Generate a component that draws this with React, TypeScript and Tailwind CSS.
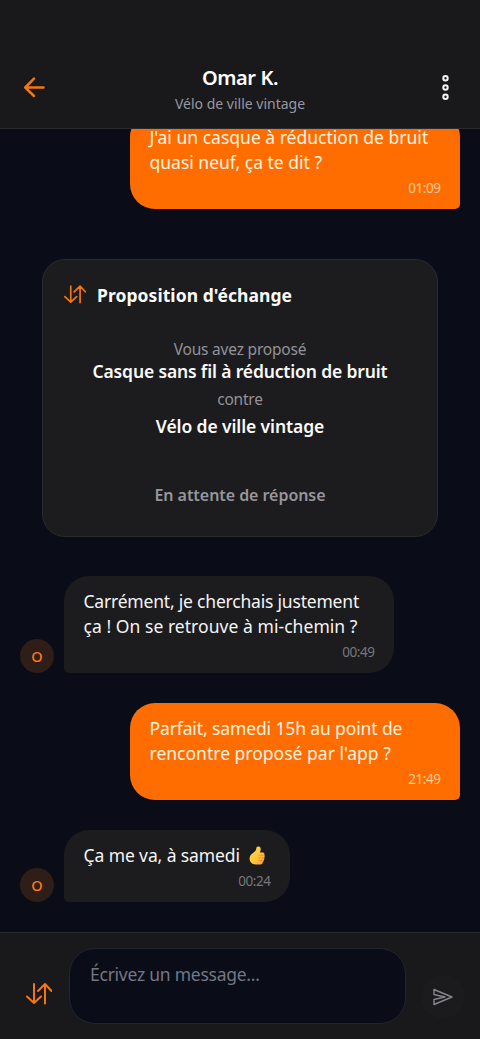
import React from 'react';
import clsx from 'clsx';

interface Message {
  lines: string[];
  time: string;
  mine?: boolean;
  thumb?: boolean;
  spacing: string[];
}

interface IconProps {
  className?: string;
}

const ExchangeIcon: React.FC<IconProps> = ({ className }) => (
  <svg
    viewBox="0 0 26 22"
    fill="none"
    stroke="currentColor"
    strokeLinecap="round"
    strokeLinejoin="round"
    className={className}
  >
    <path d="M8 1v19M1 13.5l7 6.5 7-6.5M19 20.5V1M12 8l7-7 6.5 7" />
  </svg>
);

const ThumbIcon: React.FC<IconProps> = ({ className }) => (
  <svg viewBox="0 0 16 19" className={className}>
    <defs>
      <linearGradient id="thumb" x1="0" y1="0" x2="1" y2="1">
        <stop offset="0" stopColor="#ffda4a" />
        <stop offset="0.6" stopColor="#ffc23c" />
        <stop offset="1" stopColor="#ee9b35" />
      </linearGradient>
    </defs>
    <path
      d="M9 .6c1.900-.4 2.900 1 2.700 2.800-.1 1.300-.6 2.400-.8 3.100h2.900c1.500 0 2 1.400 1.400 2.400.7.7.7 1.900 0 2.600.5.9.2 1.900-.5 2.400.3 1-.2 1.900-1 2.200.1 1.500-.8 2.300-2.200 2.300H6.500C3 18.400.6 16 .6 12.800c0-2.700 1-4.200 3.100-5.600C6.200 5.500 7 4.200 7.300 2.400 7.400 1.300 8.100.8 9 .6z"
      fill="url(#thumb)"
    />
    <path
      d="M9.800 9.200h5.200M9.800 11.900h5M9.800 14.500h4.200"
      stroke="#dd842b"
      strokeWidth="0.7"
      strokeLinecap="round"
      fill="none"
    />
  </svg>
);

const messages: Message[] = [
  {
    lines: ["J'ai un casque à réduction de bruit", 'quasi neuf, ça te dit ?'],
    time: '01:09',
    mine: true,
    spacing: ['tracking-[0.01px]', 'tracking-normal'],
  },
];

const replies: Message[] = [
  {
    lines: ['Carrément, je cherchais justement', 'ça ! On se retrouve à mi-chemin ?'],
    time: '00:49',
    spacing: ['tracking-[-0.2px]', 'tracking-[0.05px]'],
  },
  {
    lines: ['Parfait, samedi 15h au point de', "rencontre proposé par l'app ?"],
    time: '21:49',
    mine: true,
    spacing: ['tracking-[-0.12px]', 'tracking-[0.01px]'],
  },
  {
    lines: ['Ça me va, à samedi'],
    time: '00:24',
    thumb: true,
    spacing: ['tracking-[-0.1px]'],
  },
];

const Bubble: React.FC<{ message: Message }> = ({ message }) => {
  const { lines, time, mine, thumb, spacing } = message;

  return (
    <div className={clsx('flex shrink-0 items-end', mine ? 'justify-end' : 'justify-start')}>
      {!mine && (
        <div className="mr-2.5 flex size-[34px] shrink-0 items-center justify-center rounded-full bg-[#2f1d17] pt-px text-[14.500px] font-medium text-[#ff7a10]">
          O
        </div>
      )}
      <div
        className={clsx(
          'rounded-[25px] px-[19.5px] pt-[12.500px]',
          mine ? 'rounded-br-[5px] bg-[#ff6d00] text-[#fff3e2]' : 'rounded-bl-[5px] bg-[#1c1c1e] text-[#f4f4f5]',
          thumb ? 'h-[72px] w-[226px]' : 'h-[97px] w-[330px]',
        )}
      >
        {lines.map((line, i) => (
          <p key={line} className={clsx('flex items-center whitespace-nowrap text-[17.500px] leading-[25px]', spacing[i])}>
            {line}
            {thumb && <ThumbIcon className="ml-[9px] h-[19px] w-[16px]" />}
          </p>
        ))}
        <p
          className={clsx(
            'mt-1 text-right text-[13.500px] leading-[18px] tracking-[-0.45px]',
            mine ? 'text-[#ffcc9b]' : 'text-[#77777b]',
          )}
        >
          {time}
        </p>
      </div>
    </div>
  );
};

const ExchangeCard = () => (
  <div className="mx-[22px] mt-5 mb-[9px] h-[278px] shrink-0 rounded-[23px] border border-[#2b2b2e] bg-[#1c1c1e] px-[21px] text-center whitespace-nowrap">
    <div className="flex h-[71px] items-center">
      <ExchangeIcon className="-mt-0.5 h-[19px] w-[22px] stroke-2 text-[#f5760f]" />
      <h2 className="ml-[11px] text-[17.500px] font-bold tracking-[0.06px] text-[#fafafa]">Proposition d'échange</h2>
    </div>
    <div className="flex flex-col items-center pt-[7px]">
      <p className="text-[15.500px] leading-[23px] tracking-[-0.2px] text-[#929298]">Vous avez proposé</p>
      <p className="text-[17.500px] leading-[20px] font-semibold tracking-[-0.15px] text-[#fafafa]">
        Casque sans fil à réduction de bruit
      </p>
      <p className="pt-[7px] pb-1 text-[15.500px] leading-[23px] tracking-[-0.2px] text-[#929298]">contre</p>
      <p className="text-[17.500px] leading-[23px] font-semibold tracking-[-0.1px] text-[#fafafa]">Vélo de ville vintage</p>
    </div>
    <p className="mt-[46px] text-[16px] leading-[23px] font-semibold tracking-[-0.05px] text-[#96969b]">
      En attente de réponse
    </p>
  </div>
);

export default function App() {
  return (
    <div className="flex h-[1039px] w-[480px] flex-col overflow-hidden bg-[#0a0d18] font-['Noto_Sans','Open_Sans',sans-serif]">
      <header className="flex h-[129px] shrink-0 items-start justify-between border-b border-[#2b2b2e] bg-[#19191b] px-6 pt-[65px]">
        <button aria-label="Retour" className="mt-3 w-7 text-[#f5760f]">
          <svg width="21" height="21" viewBox="0 0 21 21" fill="none" stroke="currentColor" strokeWidth="2.500" strokeLinecap="round" strokeLinejoin="round">
            <path d="M19.500 10.500H1.500M10 1.700L1.300 10.500l8.700 8.500" />
          </svg>
        </button>
        <div className="text-center whitespace-nowrap">
          <h1 className="text-[20px] leading-[26px] font-semibold tracking-[-0.4px] text-white">Omar K.</h1>
          <p className="text-[14px] leading-[26px] tracking-normal text-[#9698a0]">Vélo de ville vintage</p>
        </div>
        <button aria-label="Options" className="mt-[9px] flex w-7 justify-end pr-[7px] text-[#f4f4f5]">
          <svg width="7" height="27" viewBox="0 0 7 27" fill="none" stroke="currentColor" strokeWidth="2">
            <circle cx="3.500" cy="4.200" r="2.200" />
            <circle cx="3.500" cy="13.500" r="2.200" />
            <circle cx="3.500" cy="22.800" r="2.200" />
          </svg>
        </button>
      </header>

      <main className="flex min-h-0 flex-1 flex-col justify-end gap-[30px] overflow-hidden px-5 pb-[30px]">
        {messages.map((message) => (
          <Bubble key={message.time} message={message} />
        ))}
        <ExchangeCard />
        {replies.map((message) => (
          <Bubble key={message.time} message={message} />
        ))}
      </main>

      <footer className="flex h-[107px] shrink-0 items-end border-t border-[#2b2b2e] bg-[#19191b] pr-[15px] pb-[15px] pl-[26px]">
        <button aria-label="Proposer un échange" className="mb-[19px] text-[#f5760f]">
          <ExchangeIcon className="h-[22px] w-[26px] stroke-2" />
        </button>
        <textarea
          placeholder="Écrivez un message..."
          className="ml-[17px] h-[76px] w-[337px] resize-none rounded-[26px] border border-[#202530] bg-[#0a0d18] px-5 py-[13px] text-[17.500px] leading-6 tracking-[-0.25px] placeholder:text-[#737783]"
        />
        <button
          aria-label="Envoyer"
          className="mb-[5px] ml-[15px] flex size-[44px] items-center justify-center rounded-full bg-[#1b1b1d] text-[#85858b]"
        >
          <svg width="20" height="18" viewBox="0 0 20 18" fill="none" stroke="currentColor" strokeWidth="1.400" strokeLinejoin="round">
            <path d="M1 1.500l18 7.500L1 16.500v-5l11-2.500L1 6.500v-5z" />
          </svg>
        </button>
      </footer>
    </div>
  );
}
